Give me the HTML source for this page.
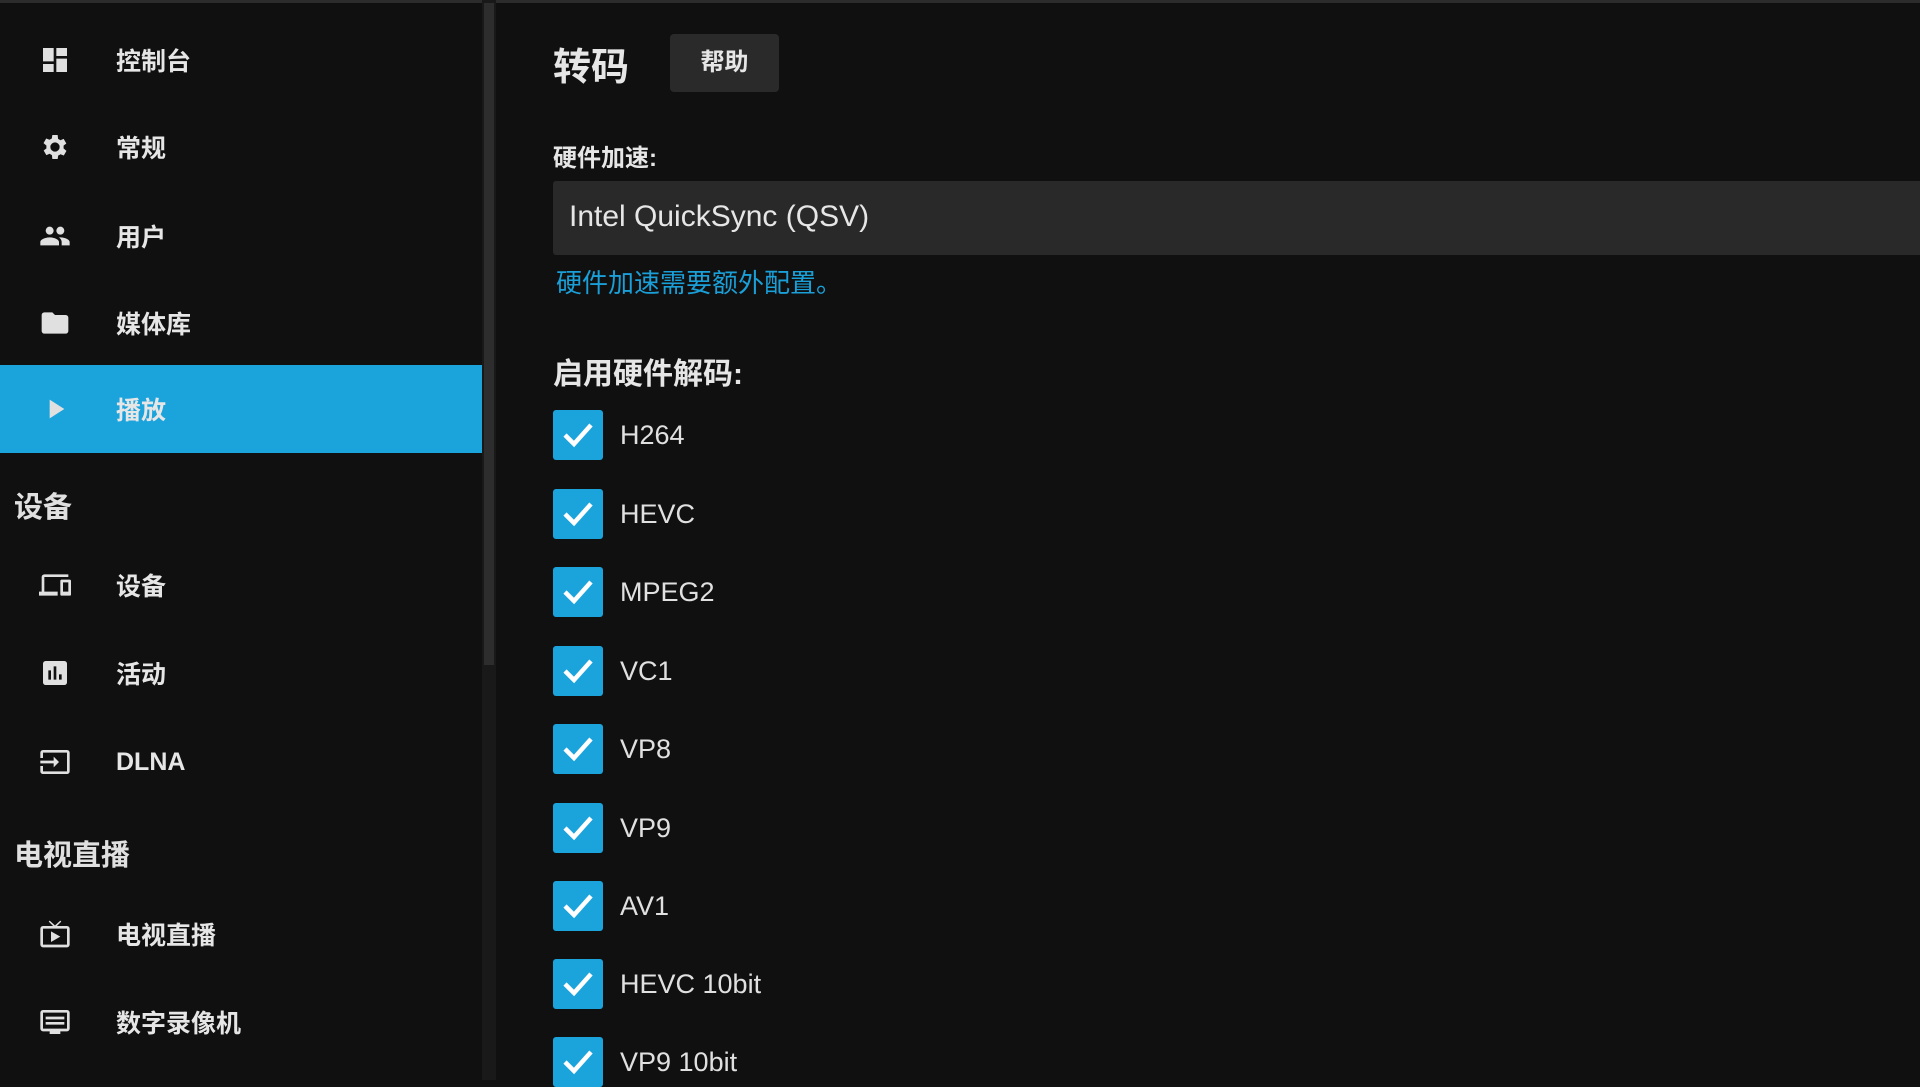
<!DOCTYPE html>
<html><head><meta charset="utf-8"><style>
*{margin:0;padding:0;box-sizing:border-box}
body{width:1920px;height:1080px;background:#101010;color:#e6e6e6;font-family:"Liberation Sans","Noto Sans CJK SC",sans-serif;position:relative;overflow:hidden}
.top{position:absolute;left:0;top:0;width:1920px;height:3px;background:#2c2c2c}
.side{position:absolute;left:0;top:3px;width:482px;height:1077px;background:#101010}
.track{position:absolute;left:482px;top:0;width:14px;height:1080px;background:#191919}
.thumb{position:absolute;left:484px;top:3px;width:10px;height:662px;background:#2d2d2d}
.item{position:absolute;left:0;width:482px;height:88px;display:flex;align-items:center}
.item.act{background:#1ba3dc}
.item svg{position:absolute;left:39px;width:32px;height:32px;fill:#e0e0e0}
.item span{position:absolute;left:116px;font-size:25px;font-weight:bold;color:#e6e6e6}
.hdr{position:absolute;left:14px;font-size:29px;color:#e0e0e0;font-weight:bold}
.abs{position:absolute}
.cb{position:absolute;left:553px;width:50px;height:50px;background:#1ba3dc;border-radius:3px}
.cb svg{position:absolute;left:9px;top:10px}
.lbl{position:absolute;left:620px;font-size:27px;color:#e0e0e0}
</style></head><body>
<div class="top"></div>
<div class="side">
</div>
<div class="track"></div><div class="thumb"></div>

<div class="item" style="top:16px"><svg viewBox="0 0 24 24"><path d="M3 3h8v10H3zM13 3h8v6h-8zM13 11h8v10h-8zM3 15h8v6H3z"/></svg><span>控制台</span></div>
<div class="item" style="top:103px"><svg viewBox="0 0 24 24"><path d="M19.4 13a7.5 7.5 0 000-2l2.1-1.6-2-3.5-2.5 1a7 7 0 00-1.7-1L15 3h-4l-.4 2.6a7 7 0 00-1.7 1l-2.5-1-2 3.5L6.6 11a7.5 7.5 0 000 2l-2.1 1.6 2 3.5 2.5-1a7 7 0 001.7 1L11 21h4l.4-2.6a7 7 0 001.7-1l2.5 1 2-3.5zM13 15.5a3.5 3.5 0 110-7 3.5 3.5 0 010 7z" transform="translate(-1 0)"/></svg><span>常规</span></div>
<div class="item" style="top:192px"><svg viewBox="0 0 24 24"><path d="M16 11a3 3 0 100-6 3 3 0 000 6zm-8 0a3 3 0 100-6 3 3 0 000 6zm0 2c-2.3 0-7 1.2-7 3.5V19h14v-2.5C15 14.2 10.3 13 8 13zm8 0c-.3 0-.6 0-1 .1 1.2.8 2 2 2 3.4V19h6v-2.5c0-2.3-4.7-3.5-7-3.5z"/></svg><span>用户</span></div>
<div class="item" style="top:279px"><svg viewBox="0 0 24 24"><path d="M10 4H4a2 2 0 00-2 2v12a2 2 0 002 2h16a2 2 0 002-2V8a2 2 0 00-2-2h-8z"/></svg><span>媒体库</span></div>
<div class="item act" style="top:365px"><svg viewBox="0 0 24 24"><path d="M8 5v14l11-7z"/></svg><span>播放</span></div>

<div class="hdr" style="top:484px">设备</div>
<div class="item" style="top:541px"><svg viewBox="0 0 24 24"><path d="M4 6h18V4H4a2 2 0 00-2 2v11H0v3h14v-3H4zm19 2h-6a1 1 0 00-1 1v10a1 1 0 001 1h6a1 1 0 001-1V9a1 1 0 00-1-1zm-1 9h-4v-7h4z"/></svg><span>设备</span></div>
<div class="item" style="top:629px"><svg viewBox="0 0 24 24"><path d="M19 3H5a2 2 0 00-2 2v14a2 2 0 002 2h14a2 2 0 002-2V5a2 2 0 00-2-2zM9 17H7v-7h2zm4 0h-2V7h2zm4 0h-2v-4h2z"/></svg><span>活动</span></div>
<div class="item" style="top:718px"><svg viewBox="0 0 24 24"><path d="M21 3H3a2 2 0 00-2 2v4h2V5h18v14H3v-4H1v4a2 2 0 002 2h18a2 2 0 002-2V5a2 2 0 00-2-2zM11 16l4-4-4-4v3H1v2h10z"/></svg><span>DLNA</span></div>

<div class="hdr" style="top:832px">电视直播</div>
<div class="item" style="top:890px"><svg viewBox="0 0 24 24"><path d="M21 6h-7.6l3.3-3.3-.7-.7L12 5.6 8 2l-.7.7L10.6 6H3a2 2 0 00-2 2v12a2 2 0 002 2h18a2 2 0 002-2V8a2 2 0 00-2-2zm0 14H3V8h18zM9 10v8l7-4z"/></svg><span>电视直播</span></div>
<div class="item" style="top:978px"><svg viewBox="0 0 24 24"><path d="M21 3H3a2 2 0 00-2 2v12a2 2 0 002 2h5v2h8v-2h5a2 2 0 002-2V5a2 2 0 00-2-2zm0 14H3V5h18zM5 8h14v2H5zm0 4h14v2H5z"/></svg><span>数字录像机</span></div>

<div class="abs" style="left:553px;top:36px;font-size:38px;font-weight:bold;color:#e6e6e6">转码</div>
<div class="abs" style="left:670px;top:34px;width:109px;height:58px;background:#2a2a2a;border-radius:4px;text-align:center;line-height:58px;font-size:24px;font-weight:bold">帮助</div>
<div class="abs" style="left:553px;top:138px;font-size:24px;font-weight:bold">硬件加速:</div>
<div class="abs" style="left:553px;top:181px;width:1367px;height:74px;background:#292929;border-radius:3px 0 0 3px"></div>
<div class="abs" style="left:569px;top:200px;font-size:30px;color:#e6e6e6">Intel QuickSync (QSV)</div>
<div class="abs" style="left:556px;top:263px;font-size:26px;color:#1a9fd8">硬件加速需要额外配置。</div>
<div class="abs" style="left:553px;top:349px;font-size:30px;font-weight:bold">启用硬件解码:</div>

<div class="cb" style="top:410px"><svg width="32" height="30" viewBox="0 0 32 30"><path d="M3 15l9 9L29 5" stroke="#fff" stroke-width="4.5" fill="none"/></svg></div><div class="lbl" style="top:420px">H264</div>
<div class="cb" style="top:489px"><svg width="32" height="30" viewBox="0 0 32 30"><path d="M3 15l9 9L29 5" stroke="#fff" stroke-width="4.5" fill="none"/></svg></div><div class="lbl" style="top:499px">HEVC</div>
<div class="cb" style="top:567px"><svg width="32" height="30" viewBox="0 0 32 30"><path d="M3 15l9 9L29 5" stroke="#fff" stroke-width="4.5" fill="none"/></svg></div><div class="lbl" style="top:577px">MPEG2</div>
<div class="cb" style="top:646px"><svg width="32" height="30" viewBox="0 0 32 30"><path d="M3 15l9 9L29 5" stroke="#fff" stroke-width="4.5" fill="none"/></svg></div><div class="lbl" style="top:656px">VC1</div>
<div class="cb" style="top:724px"><svg width="32" height="30" viewBox="0 0 32 30"><path d="M3 15l9 9L29 5" stroke="#fff" stroke-width="4.5" fill="none"/></svg></div><div class="lbl" style="top:734px">VP8</div>
<div class="cb" style="top:803px"><svg width="32" height="30" viewBox="0 0 32 30"><path d="M3 15l9 9L29 5" stroke="#fff" stroke-width="4.5" fill="none"/></svg></div><div class="lbl" style="top:813px">VP9</div>
<div class="cb" style="top:881px"><svg width="32" height="30" viewBox="0 0 32 30"><path d="M3 15l9 9L29 5" stroke="#fff" stroke-width="4.5" fill="none"/></svg></div><div class="lbl" style="top:891px">AV1</div>
<div class="cb" style="top:959px"><svg width="32" height="30" viewBox="0 0 32 30"><path d="M3 15l9 9L29 5" stroke="#fff" stroke-width="4.5" fill="none"/></svg></div><div class="lbl" style="top:969px">HEVC 10bit</div>
<div class="cb" style="top:1037px"><svg width="32" height="30" viewBox="0 0 32 30"><path d="M3 15l9 9L29 5" stroke="#fff" stroke-width="4.5" fill="none"/></svg></div><div class="lbl" style="top:1047px">VP9 10bit</div>
</body></html>
